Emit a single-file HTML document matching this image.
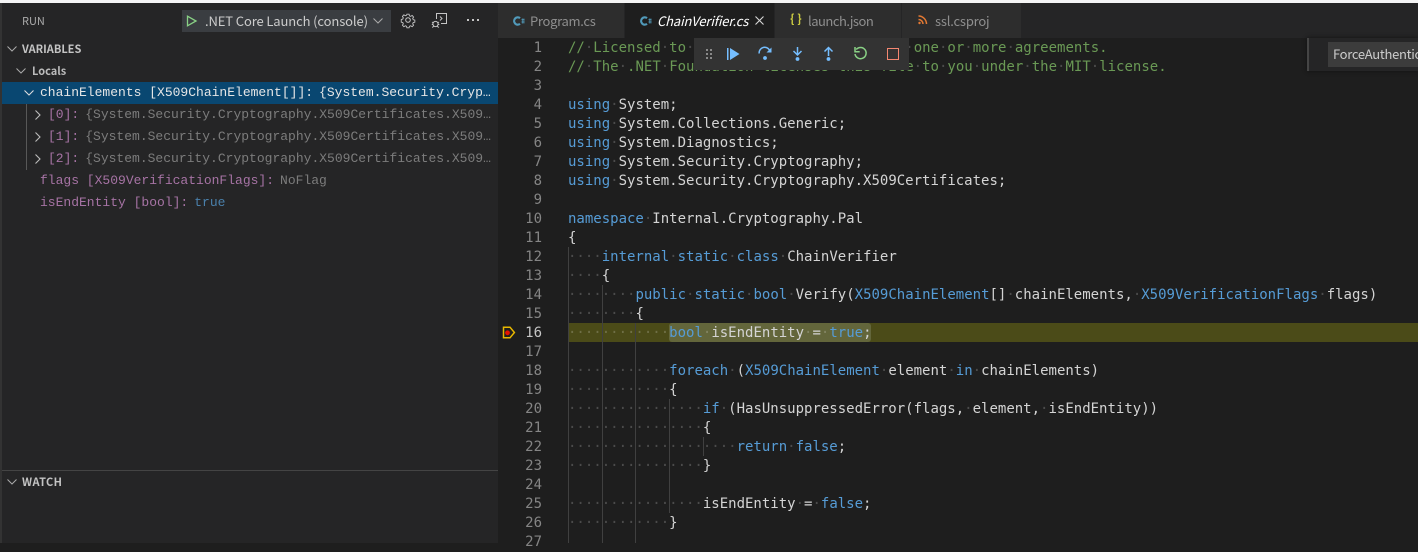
<!DOCTYPE html>
<html><head><meta charset="utf-8"><style>
*{box-sizing:border-box}
html,body{margin:0;padding:0;width:1418px;height:543px;overflow:hidden;background:#1e1e1e}
.a{position:absolute}
.ui{font-family:"Noto Sans CJK SC","Liberation Sans",sans-serif;white-space:nowrap}
.t{position:absolute;top:3px;height:35px;background:#2d2d2d;border-right:1px solid #252526}
.tl{position:absolute;top:12px;font-size:13px;line-height:18px;color:#8f8f8f;font-family:"Noto Sans CJK SC","Liberation Sans",sans-serif;white-space:nowrap}
.h{position:absolute;font-size:11px;line-height:14px;font-weight:700;color:#c4c4c4}
.v{position:absolute;height:22px;margin-top:1px;font:13px/22px "Liberation Mono",monospace;white-space:nowrap;color:#a6a6a6}
.n{color:#a673a4}.g{color:#7c7c7c;margin-left:6px}
.ln{position:absolute;left:498px;width:44px;margin-top:1px;text-align:right;height:19px;font:14px/19px "DejaVu Sans Mono",monospace;color:#858585}
.c{position:absolute;left:568px;height:19px;margin-top:1px;font:14px/19px "DejaVu Sans Mono",monospace;white-space:pre;color:#d4d4d4}
.c i{font-style:normal;color:rgba(255,255,255,.2)}
.k{color:#569cd6}.y{color:#6a9955}
.ig{position:absolute;width:1px;background:#404040}
svg{position:absolute;overflow:visible}
</style></head><body>
<div class="a" style="left:0;top:0;width:1418px;height:3px;background:#f5f5f5"></div>

<!-- sidebar -->
<div class="a" style="left:0;top:3px;width:498px;height:540px;background:#252526"></div>
<div class="a" style="left:0;top:3px;width:2px;height:540px;background:#333"></div>
<div class="a ui" style="left:22px;top:13px;font-size:11px;line-height:16px;color:#aaa">RUN</div>
<div class="a" style="left:182px;top:10px;width:209px;height:22px;background:#3a3d41"></div>
<svg style="left:186px;top:15px" width="12" height="12" viewBox="0 0 12 12"><path d="M1.5 1.2L10 6L1.5 10.8Z" fill="none" stroke="#89d185" stroke-width="1.3"/></svg>
<div class="a ui" style="left:205px;top:12px;font-size:13px;line-height:18px;color:#ccc;letter-spacing:-.12px">.NET Core Launch (console)</div>
<svg style="left:372px;top:17px" width="12" height="8" viewBox="0 0 12 8"><path d="M1.5 1.5L6 6L10.5 1.5" fill="none" stroke="#aaa" stroke-width="1"/></svg>
<svg style="left:400px;top:12px" width="16" height="16" viewBox="0 0 16 16"><g fill="none" stroke="#c5c5c5" stroke-width="1"><circle cx="8" cy="8" r="2.3"/><path d="M6.8 1.5h2.4l.4 1.9 1.3.6 1.7-1 1.6 1.7-1 1.6.6 1.4 1.8.4v2.3l-1.8.4-.6 1.4 1 1.6-1.6 1.6-1.7-1-1.3.6-.4 1.7H6.8l-.4-1.7-1.3-.6-1.7 1-1.6-1.6 1-1.6-.6-1.4-1.7-.4V7.4l1.7-.4.6-1.4-1-1.6 1.6-1.7 1.7 1 1.3-.6z" transform="translate(.8 .8) scale(.9)"/></g></svg>
<svg style="left:431px;top:12px" width="17" height="17" viewBox="0 0 17 17"><g fill="none" stroke="#c5c5c5" stroke-width="1"><path d="M5.5 7V1.5h10v10H10"/><path d="M9 4.5l2 2-2 2"/><circle cx="4.5" cy="12" r="2.6"/><path d="M1 10l1.5 1M8 10l-1.5 1M.8 12.5h1.2M7 12.5h1.3M1.2 15.5l1.5-1.2M7.8 15.5l-1.5-1.2"/></g></svg>
<div class="a" style="left:467px;top:19px;width:2px;height:2px;background:#c5c5c5;box-shadow:5px 0 #c5c5c5,10px 0 #c5c5c5"></div>

<svg style="left:6px;top:45px" width="12" height="8" viewBox="0 0 12 8"><path d="M1.5 1.5L6 6L10.5 1.5" fill="none" stroke="#aaa" stroke-width="1"/></svg>
<div class="h ui" style="left:22px;top:42px">VARIABLES</div>
<svg style="left:15px;top:67px" width="12" height="8" viewBox="0 0 12 8"><path d="M1.5 1.5L6 6L10.5 1.5" fill="none" stroke="#aaa" stroke-width="1"/></svg>
<div class="h ui" style="left:32px;top:64px;font-size:11px;color:#bbb">Locals</div>

<div class="a" style="left:2px;top:82px;width:496px;height:22px;background:#094771"></div>
<svg style="left:23px;top:89px" width="12" height="8" viewBox="0 0 12 8"><path d="M1.5 1.5L6 6L10.5 1.5" fill="none" stroke="#ddd" stroke-width="1.1"/></svg>
<div class="v" style="left:40px;top:81px;color:#e6e6e6">chainElements [X509ChainElement[]]:<span style="margin-left:6px">{System.Security.Cryp…</span></div>
<div class="a" style="left:26px;top:104px;width:1px;height:66px;background:#585858"></div>
<svg style="left:34px;top:109px" width="8" height="12" viewBox="0 0 8 12"><path d="M1.5 1.5L6 6L1.5 10.5" fill="none" stroke="#bbb" stroke-width="1.1"/></svg>
<div class="v" style="left:48px;top:103px"><span class="n">[0]:</span><span class="g">{System.Security.Cryptography.X509Certificates.X509…</span></div>
<svg style="left:34px;top:131px" width="8" height="12" viewBox="0 0 8 12"><path d="M1.5 1.5L6 6L1.5 10.5" fill="none" stroke="#bbb" stroke-width="1.1"/></svg>
<div class="v" style="left:48px;top:125px"><span class="n">[1]:</span><span class="g">{System.Security.Cryptography.X509Certificates.X509…</span></div>
<svg style="left:34px;top:153px" width="8" height="12" viewBox="0 0 8 12"><path d="M1.5 1.5L6 6L1.5 10.5" fill="none" stroke="#bbb" stroke-width="1.1"/></svg>
<div class="v" style="left:48px;top:147px"><span class="n">[2]:</span><span class="g">{System.Security.Cryptography.X509Certificates.X509…</span></div>
<div class="v" style="left:40px;top:169px"><span class="n">flags [X509VerificationFlags]:</span><span class="g">NoFlag</span></div>
<div class="v" style="left:40px;top:191px"><span class="n">isEndEntity [bool]:</span><span class="g" style="color:#4a80ab">true</span></div>

<div class="a" style="left:2px;top:470px;width:496px;height:1px;background:#444"></div>
<svg style="left:6px;top:478px" width="12" height="8" viewBox="0 0 12 8"><path d="M1.5 1.5L6 6L10.5 1.5" fill="none" stroke="#aaa" stroke-width="1"/></svg>
<div class="h ui" style="left:22px;top:475px;letter-spacing:.4px">WATCH</div>

<!-- tabs -->
<div class="a" style="left:498px;top:3px;width:920px;height:35px;background:#252526"></div>
<div class="t" style="left:498px;width:127px"></div>
<div class="t" style="left:625px;width:150px;background:#1e1e1e"></div>
<div class="t" style="left:775px;width:127px"></div>
<div class="t" style="left:902px;width:120px"></div>
<svg style="left:512px;top:16px" width="13" height="10" viewBox="0 0 13 10"><path d="M8 2.2A3.6 3.6 0 1 0 8 7.8" fill="none" stroke="#519aba" stroke-width="2.2"/><path d="M9.5 3.5h3M9.5 6h3M10.3 2.5v5M11.9 2.5v5" stroke="#519aba" stroke-width=".8"/></svg>
<div class="tl" style="left:530px;letter-spacing:-.3px">Program.cs</div>
<svg style="left:639px;top:16px" width="13" height="10" viewBox="0 0 13 10"><path d="M8 2.2A3.6 3.6 0 1 0 8 7.8" fill="none" stroke="#519aba" stroke-width="2.2"/><path d="M9.5 3.5h3M9.5 6h3M10.3 2.5v5M11.9 2.5v5" stroke="#519aba" stroke-width=".8"/></svg>
<div class="tl" style="left:657px;color:#fff;font-style:italic;letter-spacing:-.13px">ChainVerifier.cs</div>
<svg style="left:755px;top:16px" width="9" height="9" viewBox="0 0 9 9"><path d="M.5 .5L8.5 8.5M8.5 .5L.5 8.5" stroke="#d8d8d8" stroke-width="1.1"/></svg>
<div class="a ui" style="left:790px;top:11px;font-size:12px;line-height:16px;font-weight:700;color:#cbcb41">{ }</div>
<div class="tl" style="left:808px;letter-spacing:-.5px">launch.json</div>
<svg style="left:918px;top:15px" width="9" height="10" viewBox="0 0 9 10"><g fill="none" stroke="#e37933" stroke-width="1.5"><path d="M.5 4.5a4.5 4.5 0 0 1 4.5 4.5"/><path d="M.5 1a8 8 0 0 1 8 8"/></g><circle cx="1.5" cy="8" r="1.2" fill="#e37933"/></svg>
<div class="tl" style="left:935px;letter-spacing:-.2px">ssl.csproj</div>

<!-- editor -->
<div class="a" style="left:568px;top:323px;width:850px;height:19px;background:#4b4b18"></div>
<div class="a" style="left:669px;top:323px;width:202px;height:19px;background:#63663b;border-radius:3px"></div>

<div class="ig" style="left:568px;top:247px;height:296px"></div>
<div class="ig" style="left:602px;top:285px;height:258px"></div>
<div class="ig" style="left:635px;top:323px;height:220px"></div>
<div class="ig" style="left:669px;top:399px;height:114px"></div>
<div class="ig" style="left:703px;top:437px;height:19px"></div>

<div class="ln" style="top:38px">1</div>
<div class="ln" style="top:57px">2</div>
<div class="ln" style="top:76px">3</div>
<div class="ln" style="top:95px">4</div>
<div class="ln" style="top:114px">5</div>
<div class="ln" style="top:133px">6</div>
<div class="ln" style="top:152px">7</div>
<div class="ln" style="top:171px">8</div>
<div class="ln" style="top:190px">9</div>
<div class="ln" style="top:209px">10</div>
<div class="ln" style="top:228px">11</div>
<div class="ln" style="top:247px">12</div>
<div class="ln" style="top:266px">13</div>
<div class="ln" style="top:285px">14</div>
<div class="ln" style="top:304px">15</div>
<div class="ln" style="top:323px;color:#c6c6c6">16</div>
<div class="ln" style="top:342px">17</div>
<div class="ln" style="top:361px">18</div>
<div class="ln" style="top:380px">19</div>
<div class="ln" style="top:399px">20</div>
<div class="ln" style="top:418px">21</div>
<div class="ln" style="top:437px">22</div>
<div class="ln" style="top:456px">23</div>
<div class="ln" style="top:475px">24</div>
<div class="ln" style="top:494px">25</div>
<div class="ln" style="top:513px">26</div>
<div class="ln" style="top:532px">27</div>

<svg style="left:502px;top:326px" width="14" height="13" viewBox="0 0 14 13"><path d="M1.5 1.2H8L12.4 6.5L8 11.8H1.5Z" fill="none" stroke="#e8b800" stroke-width="1.5"/><circle cx="5.5" cy="6.8" r="2.4" fill="#e51400"/></svg>

<div class="c y" style="top:38px">//<i>·</i>Licensed<i>·</i>to<i>·</i>the<i>·</i>.NET<i>·</i>Foundation<i>·</i>under<i>·</i>one<i>·</i>or<i>·</i>more<i>·</i>agreements.</div>
<div class="c y" style="top:57px">//<i>·</i>The<i>·</i>.NET<i>·</i>Foundation<i>·</i>licenses<i>·</i>this<i>·</i>file<i>·</i>to<i>·</i>you<i>·</i>under<i>·</i>the<i>·</i>MIT<i>·</i>license.</div>
<div class="c" style="top:95px"><span class="k">using</span><i>·</i>System;</div>
<div class="c" style="top:114px"><span class="k">using</span><i>·</i>System.Collections.Generic;</div>
<div class="c" style="top:133px"><span class="k">using</span><i>·</i>System.Diagnostics;</div>
<div class="c" style="top:152px"><span class="k">using</span><i>·</i>System.Security.Cryptography;</div>
<div class="c" style="top:171px"><span class="k">using</span><i>·</i>System.Security.Cryptography.X509Certificates;</div>
<div class="c" style="top:209px"><span class="k">namespace</span><i>·</i>Internal.Cryptography.Pal</div>
<div class="c" style="top:228px">{</div>
<div class="c" style="top:247px"><i>····</i><span class="k">internal</span><i>·</i><span class="k">static</span><i>·</i><span class="k">class</span><i>·</i>ChainVerifier</div>
<div class="c" style="top:266px"><i>····</i>{</div>
<div class="c" style="top:285px"><i>········</i><span class="k">public</span><i>·</i><span class="k">static</span><i>·</i><span class="k">bool</span><i>·</i>Verify(<span class="k">X509ChainElement</span>[]<i>·</i>chainElements,<i>·</i><span class="k">X509VerificationFlags</span><i>·</i>flags)</div>
<div class="c" style="top:304px"><i>········</i>{</div>
<div class="c" style="top:323px"><i>············</i><span class="k">bool</span><i>·</i>isEndEntity<i>·</i>=<i>·</i><span class="k">true</span>;</div>
<div class="c" style="top:361px"><i>············</i><span class="k">foreach</span><i>·</i>(<span class="k">X509ChainElement</span><i>·</i>element<i>·</i><span class="k">in</span><i>·</i>chainElements)</div>
<div class="c" style="top:380px"><i>············</i>{</div>
<div class="c" style="top:399px"><i>················</i><span class="k">if</span><i>·</i>(HasUnsuppressedError(flags,<i>·</i>element,<i>·</i>isEndEntity))</div>
<div class="c" style="top:418px"><i>················</i>{</div>
<div class="c" style="top:437px"><i>····················</i><span class="k">return</span><i>·</i><span class="k">false</span>;</div>
<div class="c" style="top:456px"><i>················</i>}</div>
<div class="c" style="top:494px"><i>················</i>isEndEntity<i>·</i>=<i>·</i><span class="k">false</span>;</div>
<div class="c" style="top:513px"><i>············</i>}</div>

<!-- debug toolbar -->
<div class="a" style="left:694px;top:38px;width:215px;height:32px;background:#333"></div>
<svg style="left:705px;top:48px" width="8" height="12" viewBox="0 0 8 12"><g fill="#8a8a8a"><rect x="1" y="1" width="2" height="2"/><rect x="5" y="1" width="2" height="2"/><rect x="1" y="5" width="2" height="2"/><rect x="5" y="5" width="2" height="2"/><rect x="1" y="9" width="2" height="2"/><rect x="5" y="9" width="2" height="2"/></g></svg>
<svg style="left:726px;top:47px" width="14" height="14" viewBox="0 0 14 14"><rect x="1" y="1" width="1.5" height="12" fill="#75beff"/><path d="M4 1L13.5 7L4 13Z" fill="#75beff"/></svg>
<svg style="left:758px;top:46px" width="15" height="15" viewBox="0 0 15 15"><path d="M1.2 7.5A5.5 5.5 0 0 1 12 5.5" fill="none" stroke="#75beff" stroke-width="1.5"/><path d="M13.5 1.5V6.5H8.5Z" fill="#75beff"/><circle cx="7" cy="12" r="1.9" fill="#75beff"/></svg>
<svg style="left:790px;top:46px" width="15" height="16" viewBox="0 0 15 16"><path d="M7.5 1V8M3.5 5L7.5 9L11.5 5" fill="none" stroke="#75beff" stroke-width="1.5"/><circle cx="7.5" cy="13" r="1.9" fill="#75beff"/></svg>
<svg style="left:821px;top:46px" width="15" height="16" viewBox="0 0 15 16"><path d="M7.5 10V2M3.5 5.5L7.5 1.5L11.5 5.5" fill="none" stroke="#75beff" stroke-width="1.5"/><circle cx="7.5" cy="13" r="1.9" fill="#75beff"/></svg>
<svg style="left:853px;top:46px" width="15" height="15" viewBox="0 0 15 15"><path d="M3.2 3.5A5.6 5.6 0 1 1 2 8" fill="none" stroke="#89d185" stroke-width="1.5"/><path d="M2 1V5.7H6.7" fill="none" stroke="#89d185" stroke-width="1.5"/></svg>
<div class="a" style="left:887px;top:48px;width:12px;height:12px;border:1.5px solid #f48771"></div>

<!-- find widget -->
<div class="a" style="left:1307px;top:38px;width:111px;height:33px;background:#252526;box-shadow:0 0 4px #111"></div>
<div class="a" style="left:1307px;top:38px;width:2px;height:33px;background:#454545"></div>
<div class="a" style="left:1328px;top:42px;width:90px;height:25px;background:#3c3c3c"></div>
<div class="a ui" style="left:1333px;top:45px;width:85px;overflow:hidden;font-size:13px;line-height:18px;color:#ccc;letter-spacing:-.3px">ForceAuthentication</div>
</body></html>
